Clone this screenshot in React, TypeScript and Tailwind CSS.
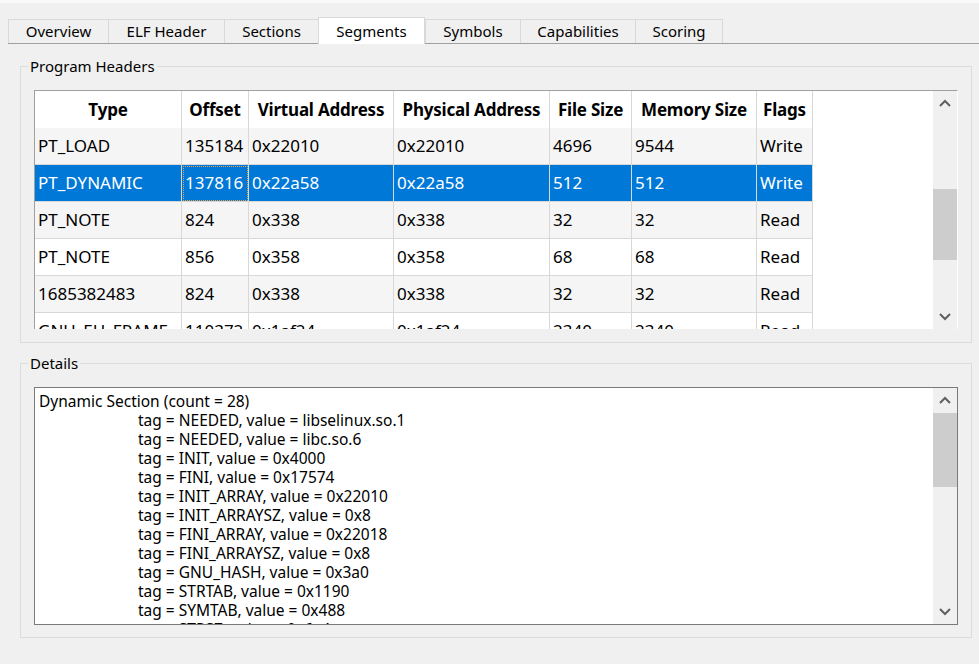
import { useState } from "react";

type Segment = {
  type: string;
  offset: string;
  vaddr: string;
  paddr: string;
  fileSize: string;
  memSize: string;
  flags: string;
};

const tabs = [
  { name: "Overview", w: "w-[100px]" },
  { name: "ELF Header", w: "w-[116px]" },
  { name: "Sections", w: "w-[94px]" },
  { name: "Segments", w: "w-[107px]" },
  { name: "Symbols", w: "w-[95px]" },
  { name: "Capabilities", w: "w-[115px]" },
  { name: "Scoring", w: "w-[88px]" },
];

const columns = [
  { label: "Type", w: "w-[147px]" },
  { label: "Offset", w: "w-[67px]" },
  { label: "Virtual Address", w: "w-[145px]" },
  { label: "Physical Address", w: "w-[156px]" },
  { label: "File Size", w: "w-[82px]" },
  { label: "Memory Size", w: "w-[125px]" },
  { label: "Flags", w: "w-[56px]" },
];

const segments: Segment[] = [
  { type: "PT_LOAD", offset: "135184", vaddr: "0x22010", paddr: "0x22010", fileSize: "4696", memSize: "9544", flags: "Write" },
  { type: "PT_DYNAMIC", offset: "137816", vaddr: "0x22a58", paddr: "0x22a58", fileSize: "512", memSize: "512", flags: "Write" },
  { type: "PT_NOTE", offset: "824", vaddr: "0x338", paddr: "0x338", fileSize: "32", memSize: "32", flags: "Read" },
  { type: "PT_NOTE", offset: "856", vaddr: "0x358", paddr: "0x358", fileSize: "68", memSize: "68", flags: "Read" },
  { type: "1685382483", offset: "824", vaddr: "0x338", paddr: "0x338", fileSize: "32", memSize: "32", flags: "Read" },
  { type: "GNU_EH_FRAME", offset: "110372", vaddr: "0x1af24", paddr: "0x1af24", fileSize: "2340", memSize: "2340", flags: "Read" },
];

const dynamicTags = [
  "tag = NEEDED, value = libselinux.so.1",
  "tag = NEEDED, value = libc.so.6",
  "tag = INIT, value = 0x4000",
  "tag = FINI, value = 0x17574",
  "tag = INIT_ARRAY, value = 0x22010",
  "tag = INIT_ARRAYSZ, value = 0x8",
  "tag = FINI_ARRAY, value = 0x22018",
  "tag = FINI_ARRAYSZ, value = 0x8",
  "tag = GNU_HASH, value = 0x3a0",
  "tag = STRTAB, value = 0x1190",
  "tag = SYMTAB, value = 0x488",
  "tag = STRSZ, value = 0x6a4",
  "tag = SYMENT, value = 0x18",
];

function Chevron({ up }: { up?: boolean }) {
  return (
    <svg width="12" height="8" viewBox="0 0 12 8" className="block">
      <path
        d={up ? "M1 7 L6 2 L11 7" : "M1 1 L6 6 L11 1"}
        fill="none"
        stroke="#606060"
        strokeWidth="2"
      />
    </svg>
  );
}

function ScrollBar({ thumbTop, thumbHeight }: { thumbTop: string; thumbHeight: string }) {
  return (
    <div className="w-[24px] bg-[#f0f0f0] flex flex-col">
      <div className="h-[24px] flex items-center justify-center">
        <Chevron up />
      </div>
      <div className="flex-1 flex flex-col">
        <div className={thumbTop} />
        <div className={`${thumbHeight} bg-[#cdcdcd]`} />
      </div>
      <div className="h-[24px] flex items-center justify-center">
        <Chevron />
      </div>
    </div>
  );
}

export default function App() {
  const [active, setActive] = useState("Segments");
  const [selected, setSelected] = useState(1);

  return (
    <div className="w-[979px] h-[664px] bg-[#f0f0f0] overflow-hidden text-black font-['Noto_Sans',sans-serif]">
      <div className="h-[3px] bg-[#f9f9f9]" />

      {/* tab bar */}
      <div className="pt-[14px]">
        <div className="flex items-end h-[27px] ml-[8px] border-b border-[#a0a0a0]">
          {tabs.map((t) =>
            t.name === active ? (
              <div
                key={t.name}
                className={`${t.w} h-[27px] -mb-px bg-white border border-b-0 border-[#d9d9d9] flex items-center justify-center text-[15px] cursor-default`}
              >
                {t.name}
              </div>
            ) : (
              <div
                key={t.name}
                onClick={() => setActive(t.name)}
                className={`${t.w} h-[24px] border-t border-l border-[#d9d9d9] last:border-r flex items-center justify-center text-[15px] cursor-default`}
              >
                {t.name}
              </div>
            )
          )}
        </div>
      </div>

      {/* Program Headers */}
      <fieldset className="ml-[20px] mr-[7px] mt-[12px] border border-[#dcdcdc]">
        <legend className="ml-[7px] px-[2px] text-[15px] leading-[20px]">Program Headers</legend>
        <div className="px-[13px] pt-[14px] pb-[13px]">
          <div className="h-[239px] border-t border-l border-[#a0a0a0] border-r border-r-white flex">
            <div className="flex-1 bg-white overflow-hidden text-[17px]">
              <div className="flex h-[37px] bg-white">
                {columns.map((c) => (
                  <div
                    key={c.label}
                    className={`${c.w} shrink-0 border-r border-[#d8d8d8] flex items-center justify-center font-bold whitespace-nowrap tracking-[-0.2px]`}
                  >
                    {c.label}
                  </div>
                ))}
              </div>
              {segments.map((s, i) => {
                const isSel = i === selected;
                const bg = isSel ? "bg-[#0078d7] text-white" : i % 2 === 0 ? "bg-[#f5f5f5]" : "bg-white";
                const cells = [s.type, s.offset, s.vaddr, s.paddr, s.fileSize, s.memSize, s.flags];
                return (
                  <div key={i} className="flex h-[37px]" onClick={() => setSelected(i)}>
                    {cells.map((v, j) => (
                      <div
                        key={j}
                        className={`${columns[j].w} shrink-0 ${bg} border-r border-b border-[#d8d8d8] flex items-center pl-[3px] whitespace-nowrap overflow-hidden ${
                          isSel && j === 1 ? "outline-1 outline-dotted outline-[#f0a040] -outline-offset-2" : ""
                        }`}
                      >
                        {v}
                      </div>
                    ))}
                  </div>
                );
              })}
            </div>
            <ScrollBar thumbTop="h-[74px]" thumbHeight="h-[71px]" />
          </div>
        </div>
      </fieldset>

      {/* Details */}
      <fieldset className="ml-[20px] mr-[7px] mt-[10px] border border-[#dcdcdc]">
        <legend className="ml-[7px] px-[2px] text-[15px] leading-[20px]">Details</legend>
        <div className="px-[13px] pt-[14px] pb-[12px]">
          <div className="h-[238px] border border-[#7a7a7a] bg-white flex">
            <div className="flex-1 overflow-hidden pl-[4px] pt-[4px] text-[15.5px] leading-[19px] whitespace-nowrap">
              <div>Dynamic Section (count = 28)</div>
              {dynamicTags.map((t) => (
                <div key={t} className="pl-[99px]">
                  {t}
                </div>
              ))}
            </div>
            <ScrollBar thumbTop="h-[1px]" thumbHeight="h-[74px]" />
          </div>
        </div>
      </fieldset>
    </div>
  );
}
